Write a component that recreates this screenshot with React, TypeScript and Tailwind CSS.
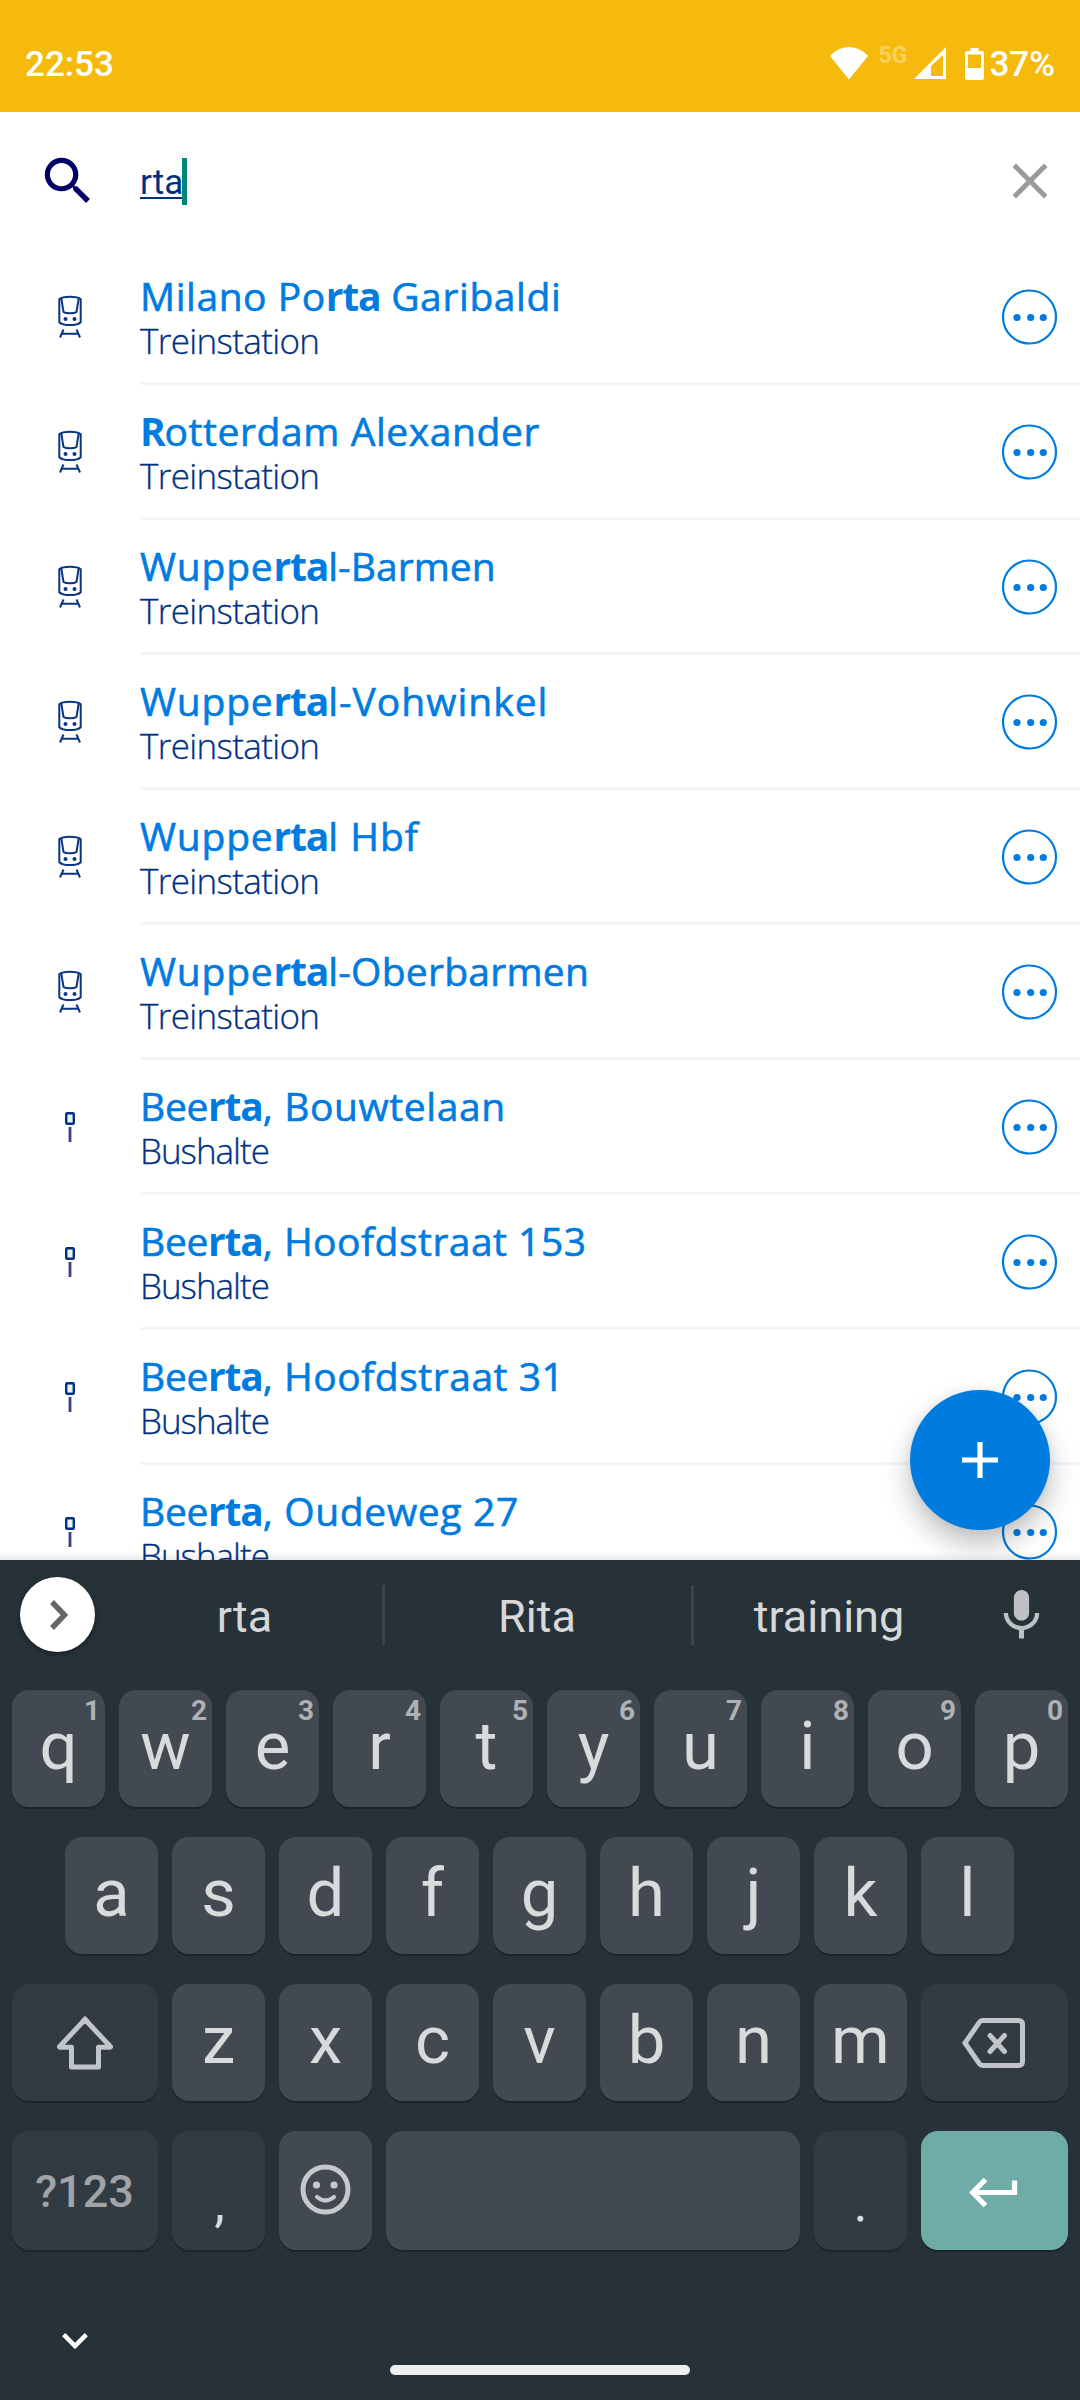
import type { ReactNode } from 'react';
import { clsx } from 'clsx';

type Stop = {
  /** Text before, inside and after the highlighted match. */
  name: [string, string, string];
  kind: 'Treinstation' | 'Bushalte';
  /** Letter spacing before and after the match. */
  tracking: [string, string];
};

const stops: Stop[] = [
  { name: ['Milano Po', 'rta', ' Garibaldi'], kind: 'Treinstation', tracking: ['tracking-[0.55px]', 'tracking-[0.6px]'] },
  { name: ['', 'R', 'otterdam Alexander'], kind: 'Treinstation', tracking: ['', 'tracking-[0.58px]'] },
  { name: ['Wuppe', 'rta', 'l-Barmen'], kind: 'Treinstation', tracking: ['tracking-[0.8px]', 'tracking-[0.06px]'] },
  { name: ['Wuppe', 'rta', 'l-Vohwinkel'], kind: 'Treinstation', tracking: ['tracking-[0.8px]', 'tracking-[1px]'] },
  { name: ['Wuppe', 'rta', 'l Hbf'], kind: 'Treinstation', tracking: ['tracking-[0.8px]', 'tracking-[1px]'] },
  { name: ['Wuppe', 'rta', 'l-Oberbarmen'], kind: 'Treinstation', tracking: ['tracking-[0.8px]', 'tracking-[0.26px]'] },
  { name: ['Bee', 'rta', ', Bouwtelaan'], kind: 'Bushalte', tracking: ['tracking-[-0.3px]', 'tracking-[0.6px]'] },
  { name: ['Bee', 'rta', ', Hoofdstraat 153'], kind: 'Bushalte', tracking: ['tracking-[-0.3px]', 'tracking-[0.48px]'] },
  { name: ['Bee', 'rta', ', Hoofdstraat 31'], kind: 'Bushalte', tracking: ['tracking-[-0.3px]', 'tracking-[0.52px]'] },
  { name: ['Bee', 'rta', ', Oudeweg 27'], kind: 'Bushalte', tracking: ['tracking-[-0.3px]', 'tracking-[0.66px]'] },
];

function StatusBar() {
  return (
    <header className="flex h-[112px] items-start bg-[#f6ba0c] pt-[47px] pr-[25px] pl-[25px] text-[35px] leading-[36px] font-medium text-white">
      <span>22:53</span>
      <svg className="ml-auto" width="38" height="33" viewBox="0 0 38 33" fill="currentColor">
        <path d="M19 32.500L0 9C5 3.500 11.500 0 19 0s14 3.500 19 9z" />
      </svg>
      <span className="mt-px ml-[11px] text-[23px] leading-[16px] font-bold text-white/35">5G</span>
      <svg className="ml-[7px]" width="32" height="32" viewBox="0 0 32 32" fill="currentColor">
        <path fillRule="evenodd" d="M0 32L32 0v32zM17 19v10h12V8z" />
      </svg>
      <svg className="mt-px ml-[19px]" width="19" height="32" viewBox="0 0 19 32" fill="currentColor">
        <path
          fillRule="evenodd"
          d="M5.500 0h8v3H17a2 2 0 0 1 2 2v25a2 2 0 0 1-2 2H2a2 2 0 0 1-2-2V5a2 2 0 0 1 2-2h3.500zM3 6.500V20h13V6.500z"
        />
      </svg>
      <span className="ml-[5px]">37%</span>
    </header>
  );
}

function SearchBar() {
  return (
    <div className="flex h-[138px] items-center pr-5 pl-[37px]">
      <svg width="62" height="62" viewBox="0 0 24 24" fill="#000066">
        <path d="M15.500 14h-.79l-.28-.27A6.470 6.470 0 0 0 16 9.500 6.500 6.500 0 1 0 9.500 16c1.610 0 3.090-.59 4.230-1.570l.27.28v.79l5 4.990L20.490 19l-4.990-5zm-6 0C7.010 14 5 11.990 5 9.500S7.010 5 9.500 5 14 7.010 14 9.500 11.990 14 9.500 14z" />
      </svg>
      <div className="ml-[41px] flex h-[47px]">
        <span className="text-[35px] leading-[50px] text-[#003082] underline decoration-2 underline-offset-[3px]">
          rta
        </span>
        <span className="-ml-px w-[5px] bg-[#008577]" />
      </div>
      <svg className="ml-auto" width="60" height="60" viewBox="0 0 24 24" fill="#9a9a9a">
        <path d="M19 6.410L17.590 5 12 10.590 6.410 5 5 6.410 10.590 12 5 17.590 6.410 19 12 13.410 17.590 19 19 17.590 13.410 12z" />
      </svg>
    </div>
  );
}

function TrainIcon() {
  return (
    <svg width="26" height="46" viewBox="0 0 26 46" fill="none" stroke="#0a3584" strokeWidth="2">
      <path d="M2.300 5.200C6 1.800 20 1.800 23.700 5.200V28.200C20 32 6 32 2.300 28.200Z" />
      <path d="M4.300 4.500L6.500 18C9 19.800 17 19.800 19.500 18L21.700 4.500" />
      <path d="M6.500 35.500L3 43.500M19.500 35.500L23 43.500M5 39.700H21" />
      <g fill="#0a3584" stroke="none">
        <circle cx="8.500" cy="25" r="2" />
        <circle cx="17.500" cy="25" r="2" />
      </g>
    </svg>
  );
}

function BusStopIcon() {
  return (
    <svg width="10" height="30" viewBox="0 0 10 30">
      <rect x="1.200" y="1.200" width="7.600" height="10.600" rx="1" fill="#e8f2f5" stroke="#003082" strokeWidth="2.400" />
      <path d="M5 15v15" stroke="#3d3d8f" strokeWidth="2.800" />
    </svg>
  );
}

function MoreButton() {
  return (
    <button className="mt-px mr-[22px]">
      <svg width="56" height="56" viewBox="0 0 56 56" fill="#007bdf">
        <circle cx="27.500" cy="28" r="26.500" fill="none" stroke="#007bdf" strokeWidth="2.200" />
        <circle cx="15" cy="28.500" r="3.600" />
        <circle cx="28.700" cy="28.500" r="3.600" />
        <circle cx="41.300" cy="28.500" r="3.600" />
      </svg>
    </button>
  );
}

function StopRow({ name: [before, match, after], kind, tracking }: Stop) {
  return (
    <li className="flex h-[135px] font-['Open_Sans',sans-serif]">
      <div className="flex h-[134px] w-[140px] shrink-0 items-center justify-center">
        {kind === 'Treinstation' ? <TrainIcon /> : <BusStopIcon />}
      </div>
      <div className="flex flex-1 items-center justify-between border-b-[3px] border-[#f5f5f5]">
        <div className="self-start pt-6 whitespace-nowrap">
          <p className="text-[39px] leading-[44px] text-[#007bdf] [-webkit-text-stroke:0.6px_#007bdf]">
            <span className={tracking[0]}>{before}</span>
            <b className="font-bold tracking-[-1.2px] [-webkit-text-stroke:0px]">{match}</b>
            <span className={tracking[1]}>{after}</span>
          </p>
          <p
            className={clsx(
              'text-[35px] leading-[45px] font-light text-[#003082] [-webkit-text-stroke:0.3px_#003082]',
              kind === 'Treinstation' ? 'tracking-[-0.65px]' : 'tracking-[-1px]',
            )}
          >
            {kind}
          </p>
        </div>
        <MoreButton />
      </div>
    </li>
  );
}

type KeyProps = {
  children?: ReactNode;
  hint?: string;
  className?: string;
};

function Key({ children, hint, className = 'w-[93px] bg-[#424950]' }: KeyProps) {
  return (
    <button
      className={clsx(
        'relative flex h-full items-center justify-center rounded-[17px] text-[67px] leading-[112px] text-[#d9dadc] shadow-[0_2px_0_#1c242a]',
        className,
      )}
    >
      {hint && (
        <span className="absolute top-[7px] right-[5px] text-[28px] leading-[28px] font-bold text-[#aeb2b5]">{hint}</span>
      )}
      {children}
    </button>
  );
}

function Letters({ keys }: { keys: string }) {
  return keys.split('').map((k) => (
    <Key key={k}>
      <span className="h-full">{k}</span>
    </Key>
  ));
}

function Suggestions() {
  return (
    <div className="flex h-[110px] items-center pl-5 text-[45px] leading-[113px] text-[#d6d8da]">
      <button className="-mt-px flex size-[75px] items-center justify-center rounded-full bg-white pl-[3px] shadow-[0_2px_5px_rgba(0,0,0,0.4)]">
        <svg width="18" height="30" viewBox="0 0 18 30" fill="none" stroke="#666" strokeWidth="5.500">
          <path d="M2 2L14.500 15 2 28" />
        </svg>
      </button>
      <span className="ml-3 h-[110px] w-[275px] text-center">rta</span>
      <i className="h-[60px] w-[3px] bg-[#39444b]" />
      <span className="h-[110px] w-[306px] pr-0.5 text-center">Rita</span>
      <i className="h-[60px] w-[3px] bg-[#39444b]" />
      <span className="h-[110px] w-[268px] pl-0.5 text-center">training</span>
      <svg className="ml-[29px]" width="61" height="61" viewBox="0 0 24 24" fill="#bdc1c4">
        <path d="M12 14c1.660 0 2.990-1.340 2.990-3L15 5c0-1.660-1.340-3-3-3S9 3.340 9 5v6c0 1.660 1.340 3 3 3zm5.300-3c0 3-2.540 5.100-5.300 5.100S6.700 14 6.700 11H5c0 3.410 2.720 6.230 6 6.720V21h2v-3.280c3.280-.48 6-3.300 6-6.720h-1.700z" />
      </svg>
    </div>
  );
}

function Keyboard() {
  return (
    <section className="h-[840px] bg-[#263238]">
      <Suggestions />
      <div className="flex flex-col gap-[30px] px-3 pt-5">
        <div className="flex h-[117px] justify-center gap-[14px]">
          {'qwertyuiop'.split('').map((k, i) => (
            <Key key={k} hint={String((i + 1) % 10)}>
              <span className="h-full">{k}</span>
            </Key>
          ))}
        </div>
        <div className="flex h-[117px] justify-center gap-[14px] pr-px">
          <Letters keys="asdfghjkl" />
        </div>
        <div className="flex h-[117px] gap-[14px]">
          <Key className="w-[146px] bg-[#313b41]">
            <svg width="58" height="56" viewBox="0 0 58 56" fill="none" stroke="#c1c4c8" strokeWidth="5">
              <path strokeLinejoin="round" d="M29 4.500L3.700 31.500Q3 32.300 4.500 32.300H15.500V52H42.500V32.300H53.500Q55 32.300 54.300 31.500Z" />
              <path d="M26 7.700L29 4.500L32 7.700" />
            </svg>
          </Key>
          <Letters keys="zxcvbnm" />
          <Key className="w-[147px] bg-[#313b41]">
            <svg className="-ml-px" width="66" height="52" viewBox="0 0 66 52" fill="none" stroke="#c1c4c8" strokeWidth="5">
              <path d="M21.500 3.500H57.500q4 0 4 4V44.500q0 4-4 4H21.500q-2 0-3.200-1.800L4 26 18.300 5.300q1.200-1.800 3.200-1.800Z" />
              <path strokeLinecap="round" d="M29 18.500L43.500 34.500M43.500 18.500L29 34.500" />
            </svg>
          </Key>
        </div>
        <div className="flex h-[119px] gap-[14px]">
          <Key className="w-[146px] bg-[#313b41]">
            <span className="h-full pr-px text-[45px] leading-[121px] font-medium text-[#a0a4a8]">?123</span>
          </Key>
          <Key className="w-[93px] bg-[#313b41]">
            <span className="h-full pl-0.5 text-[54px] leading-[143px]">,</span>
          </Key>
          <Key>
            <svg className="-mt-0.5" width="51" height="51" viewBox="0 0 51 51" fill="none" stroke="#c6c9cc" strokeWidth="5">
              <circle cx="25.500" cy="25.500" r="22.500" />
              <path strokeLinecap="round" strokeWidth="4.200" d="M17 33Q25.500 40 34 33" />
              <circle cx="16.500" cy="21" r="3.600" fill="#c6c9cc" stroke="none" />
              <circle cx="34" cy="21" r="3.600" fill="#c6c9cc" stroke="none" />
            </svg>
          </Key>
          <Key className="w-[414px] bg-[#424950]" />
          <Key className="w-[93px] bg-[#313b41]">
            <span className="h-full text-[54px] leading-[143px]">.</span>
          </Key>
          <Key className="w-[147px] bg-[#6faca8]">
            <svg className="mt-1 -ml-[3px]" width="50" height="31" viewBox="0 0 50 31" fill="none" stroke="#fff" strokeWidth="5.200">
              <path d="M46.500 3.500V15.500H5M17.500 2.500L4.700 15.500L17.500 28.500" />
            </svg>
          </Key>
        </div>
      </div>
      <div className="flex flex-col items-center pt-[83px]">
        <svg className="ml-[62px] self-start" width="26" height="16" viewBox="0 0 26 16" fill="none" stroke="#fff" strokeWidth="4.500">
          <path d="M1.700 1.700L13 13 24.300 1.700" />
        </svg>
        <div className="mt-4 h-2.5 w-[300px] rounded-full bg-[#eeeeee]" />
      </div>
    </section>
  );
}

export default function App() {
  return (
    <div className="h-[2400px] w-[1080px] overflow-hidden bg-white font-[Roboto,sans-serif]">
      <main className="relative h-[1560px] overflow-hidden">
        <StatusBar />
        <SearchBar />
        <ul>
          {stops.map((stop) => (
            <StopRow key={stop.name.join('')} {...stop} />
          ))}
        </ul>
        <button className="absolute top-[1390px] left-[910px] flex size-[140px] items-center justify-center rounded-full bg-[#007bdf] shadow-[0_14px_28px_rgba(0,0,0,0.25),0_0_10px_rgba(0,0,0,0.06)]">
          <svg width="36" height="36" viewBox="0 0 36 36" stroke="#fff" strokeWidth="5.200">
            <path d="M18 0V36M0 18H36" />
          </svg>
        </button>
        <div className="absolute inset-x-0 bottom-0 h-2 bg-linear-to-t from-black/8 to-transparent" />
      </main>
      <Keyboard />
    </div>
  );
}
